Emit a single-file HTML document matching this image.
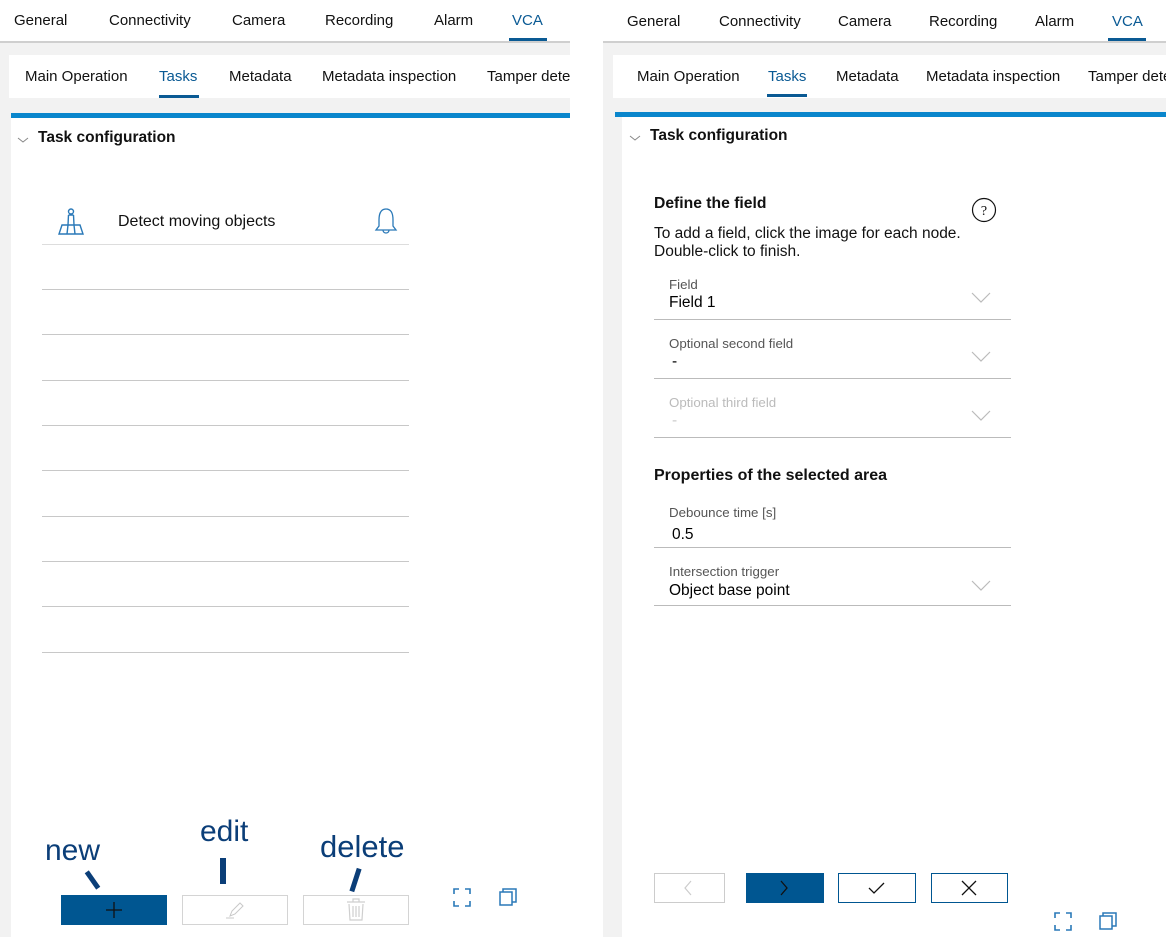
<!DOCTYPE html>
<html><head><meta charset="utf-8"><style>
*{margin:0;padding:0;box-sizing:border-box}
body{width:1166px;height:937px;background:#fff;position:relative;overflow:hidden;font-family:"Liberation Sans",Arial,sans-serif;color:#111}
.a{position:absolute}
.t{position:absolute;font-size:15px;white-space:nowrap}
.hl{position:absolute;height:1px;background:#c8c8c8}
.lbl{position:absolute;font-size:13.3px;color:#555;white-space:nowrap}
.val{position:absolute;font-size:15.5px;color:#000;white-space:nowrap}
</style></head><body>

<!-- LEFT PANEL -->
<div class="a" style="left:0;top:41px;width:570px;height:2px;background:#cfcfcf"></div>
<div class="a" style="left:0;top:43px;width:570px;height:894px;background:#f2f2f2"></div>
<div class="a" style="left:9px;top:55px;width:561px;height:43px;background:#fff"></div>
<div class="a" style="left:11px;top:113px;width:559px;height:824px;background:#fff"></div>
<div class="a" style="left:11px;top:113px;width:559px;height:5px;background:#0a86cc"></div>

<div class="t" style="left:14px;top:12px">General</div>
<div class="t" style="left:109px;top:12px">Connectivity</div>
<div class="t" style="left:232px;top:12px">Camera</div>
<div class="t" style="left:325px;top:12px">Recording</div>
<div class="t" style="left:434px;top:12px">Alarm</div>
<div class="t" style="left:512px;top:12px;color:#0a5a94">VCA</div>
<div class="a" style="left:509px;top:38px;width:38px;height:3px;background:#0a5a94"></div>

<div class="t" style="left:25px;top:68px">Main Operation</div>
<div class="t" style="left:159px;top:68px;color:#0a5a94">Tasks</div>
<div class="t" style="left:229px;top:68px">Metadata</div>
<div class="t" style="left:322px;top:68px">Metadata inspection</div>
<div class="t" style="left:487px;top:68px;width:83px;overflow:hidden">Tamper detection</div>
<div class="a" style="left:159px;top:95px;width:40px;height:3px;background:#0a5a94"></div>

<svg class="a" style="left:17px;top:136px" width="12" height="8"><path d="M1 2 L6 6 L11 2" fill="none" stroke="#888" stroke-width="1"/></svg>
<div class="t" style="left:38px;top:129px;font-weight:bold;font-size:15.5px">Task configuration</div>

<svg class="a" style="left:57px;top:208px" width="28" height="28" fill="none" stroke="#2a79b8" stroke-width="1.4"><circle cx="14" cy="3.5" r="2.5"/><path d="M11.5 7 L11 17 M16.5 7 L17 17 M11 17 L10 26 M17 17 L18 26 M11.5 7 H16.5"/><path d="M5 17 L23 17 L26 26 L2 26 Z"/></svg>
<div class="t" style="left:118px;top:213px;font-size:16px">Detect moving objects</div>
<svg class="a" style="left:374px;top:207px" width="24" height="28" fill="none" stroke="#2a79b8" stroke-width="1.3"><path d="M12 2 C6 2 5 8 5 13 L5 19 L2 23 L22 23 L19 19 L19 13 C19 8 18 2 12 2 Z"/><path d="M9 23 C9 27 15 27 15 23"/></svg>

<div class="hl" style="left:42px;top:244px;width:367px;background:#ddd"></div>
<div class="hl" style="left:42px;top:289px;width:367px"></div>
<div class="hl" style="left:42px;top:334px;width:367px"></div>
<div class="hl" style="left:42px;top:380px;width:367px"></div>
<div class="hl" style="left:42px;top:425px;width:367px"></div>
<div class="hl" style="left:42px;top:470px;width:367px"></div>
<div class="hl" style="left:42px;top:516px;width:367px"></div>
<div class="hl" style="left:42px;top:561px;width:367px"></div>
<div class="hl" style="left:42px;top:606px;width:367px"></div>
<div class="hl" style="left:42px;top:652px;width:367px"></div>

<div class="t" style="left:45px;top:834px;font-size:30px;color:#0b3e78">new</div>
<div class="t" style="left:200px;top:815px;font-size:30px;color:#0b3e78">edit</div>
<div class="t" style="left:320px;top:829px;font-size:31px;color:#0b3e78">delete</div>
<div class="a" style="left:90px;top:870px;width:5px;height:20px;background:#0b3e78;transform:rotate(-35deg)"></div>
<div class="a" style="left:220px;top:858px;width:6px;height:26px;background:#0b3e78"></div>
<div class="a" style="left:353px;top:868px;width:5px;height:24px;background:#0b3e78;transform:rotate(18deg)"></div>

<div class="a" style="left:61px;top:895px;width:106px;height:30px;background:#005691"></div>
<svg class="a" style="left:105px;top:901px" width="18" height="18"><path d="M9 1 V17 M1 9 H17" stroke="#111" stroke-width="1.3"/></svg>
<div class="a" style="left:182px;top:895px;width:106px;height:30px;border:1px solid #d4d4d4"></div>
<svg class="a" style="left:226px;top:900px" width="20" height="20" fill="none" stroke="#c8c8c8" stroke-width="1"><path d="M4 16 L6 11 L14 3 L17 6 L9 14 Z M0 18 H8"/></svg>
<div class="a" style="left:303px;top:895px;width:106px;height:30px;border:1px solid #d4d4d4"></div>
<svg class="a" style="left:345px;top:898px" width="22" height="24" fill="none" stroke="#cfcfcf" stroke-width="1.2"><path d="M2 4 H20 M8 4 V1 H14 V4 M4 6 L5 22 H17 L18 6 M8 8 V19 M11 8 V19 M14 8 V19"/></svg>

<svg class="a" style="left:453px;top:888px" width="18" height="19" fill="none" stroke="#2a79b8" stroke-width="1.6"><path d="M1 6 V1 H6 M12 1 H17 V6 M17 13 V18 H12 M6 18 H1 V13"/></svg>
<svg class="a" style="left:498px;top:887px" width="20" height="20" fill="none" stroke="#2a79b8" stroke-width="1.5"><rect x="2" y="5" width="12" height="13"/><path d="M5 5 V2 H18 V15 H14"/></svg>

<!-- RIGHT PANEL -->
<div class="a" style="left:603px;top:41px;width:563px;height:2px;background:#cfcfcf"></div>
<div class="a" style="left:603px;top:43px;width:563px;height:894px;background:#f2f2f2"></div>
<div class="a" style="left:613px;top:55px;width:553px;height:43px;background:#fff"></div>
<div class="a" style="left:622px;top:112px;width:544px;height:825px;background:#fff"></div>
<div class="a" style="left:615px;top:112px;width:551px;height:5px;background:#0a86cc"></div>

<div class="t" style="left:627px;top:13px">General</div>
<div class="t" style="left:719px;top:13px">Connectivity</div>
<div class="t" style="left:838px;top:13px">Camera</div>
<div class="t" style="left:929px;top:13px">Recording</div>
<div class="t" style="left:1035px;top:13px">Alarm</div>
<div class="t" style="left:1112px;top:13px;color:#0a5a94">VCA</div>
<div class="a" style="left:1108px;top:38px;width:38px;height:3px;background:#0a5a94"></div>

<div class="t" style="left:637px;top:68px">Main Operation</div>
<div class="t" style="left:768px;top:68px;color:#0a5a94">Tasks</div>
<div class="t" style="left:836px;top:68px">Metadata</div>
<div class="t" style="left:926px;top:68px">Metadata inspection</div>
<div class="t" style="left:1088px;top:68px;width:78px;overflow:hidden">Tamper detection</div>
<div class="a" style="left:767px;top:94px;width:40px;height:3px;background:#0a5a94"></div>

<svg class="a" style="left:629px;top:134px" width="12" height="8"><path d="M1 2 L6 6 L11 2" fill="none" stroke="#888" stroke-width="1"/></svg>
<div class="t" style="left:650px;top:127px;font-weight:bold;font-size:15.5px">Task configuration</div>

<div class="t" style="left:654px;top:195px;font-weight:bold;font-size:15.7px">Define the field</div>
<svg class="a" style="left:971px;top:197px" width="26" height="26"><circle cx="13" cy="13" r="11.5" fill="none" stroke="#111" stroke-width="1.2"/><text x="13" y="18" text-anchor="middle" font-family="Liberation Serif" font-size="14" fill="#111">?</text></svg>
<div class="t" style="left:654px;top:225px;font-size:15.5px;line-height:18px">To add a field, click the image for each node.<br>Double-click to finish.</div>

<div class="lbl" style="left:669px;top:277px">Field</div>
<div class="val" style="left:669px;top:294px">Field 1</div>
<svg class="a" style="left:971px;top:292px" width="20" height="12"><path d="M1 1 L10 10 L19 1" fill="none" stroke="#bbb" stroke-width="1.2"/></svg>
<div class="hl" style="left:654px;top:319px;width:357px;background:#bbb"></div>

<div class="lbl" style="left:669px;top:336px">Optional second field</div>
<div class="val" style="left:672px;top:353px">-</div>
<svg class="a" style="left:971px;top:351px" width="20" height="12"><path d="M1 1 L10 10 L19 1" fill="none" stroke="#bbb" stroke-width="1.2"/></svg>
<div class="hl" style="left:654px;top:378px;width:357px;background:#bbb"></div>

<div class="lbl" style="left:669px;top:395px;color:#bbb">Optional third field</div>
<div class="val" style="left:672px;top:412px;color:#ccc">-</div>
<svg class="a" style="left:971px;top:410px" width="20" height="12"><path d="M1 1 L10 10 L19 1" fill="none" stroke="#bbb" stroke-width="1.2"/></svg>
<div class="hl" style="left:654px;top:437px;width:357px;background:#bbb"></div>

<div class="t" style="left:654px;top:467px;font-weight:bold;font-size:16px">Properties of the selected area</div>

<div class="lbl" style="left:669px;top:505px">Debounce time [s]</div>
<div class="val" style="left:672px;top:526px">0.5</div>
<div class="hl" style="left:654px;top:547px;width:357px;background:#bbb"></div>

<div class="lbl" style="left:669px;top:564px">Intersection trigger</div>
<div class="val" style="left:669px;top:582px">Object base point</div>
<svg class="a" style="left:971px;top:580px" width="20" height="12"><path d="M1 1 L10 10 L19 1" fill="none" stroke="#bbb" stroke-width="1.2"/></svg>
<div class="hl" style="left:654px;top:605px;width:357px;background:#bbb"></div>

<div class="a" style="left:654px;top:873px;width:71px;height:30px;border:1px solid #ccc"></div>
<svg class="a" style="left:682px;top:879px" width="12" height="18"><path d="M9 2 L3 9 L9 16" fill="none" stroke="#ccc" stroke-width="1.2"/></svg>
<div class="a" style="left:746px;top:873px;width:78px;height:30px;background:#005691"></div>
<svg class="a" style="left:778px;top:879px" width="12" height="18"><path d="M3 2 L9 9 L3 16" fill="none" stroke="#111" stroke-width="1.3"/></svg>
<div class="a" style="left:838px;top:873px;width:78px;height:30px;border:1.5px solid #005691"></div>
<svg class="a" style="left:867px;top:880px" width="20" height="16"><path d="M2 8 L7 13 L17 3" fill="none" stroke="#111" stroke-width="1.3"/></svg>
<div class="a" style="left:931px;top:873px;width:77px;height:30px;border:1.5px solid #005691"></div>
<svg class="a" style="left:960px;top:879px" width="18" height="18"><path d="M2 2 L16 16 M16 2 L2 16" stroke="#111" stroke-width="1.3"/></svg>

<svg class="a" style="left:1054px;top:912px" width="18" height="19" fill="none" stroke="#2a79b8" stroke-width="1.6"><path d="M1 6 V1 H6 M12 1 H17 V6 M17 13 V18 H12 M6 18 H1 V13"/></svg>
<svg class="a" style="left:1098px;top:911px" width="20" height="20" fill="none" stroke="#2a79b8" stroke-width="1.5"><rect x="2" y="5" width="12" height="13"/><path d="M5 5 V2 H18 V15 H14"/></svg>

</body></html>
